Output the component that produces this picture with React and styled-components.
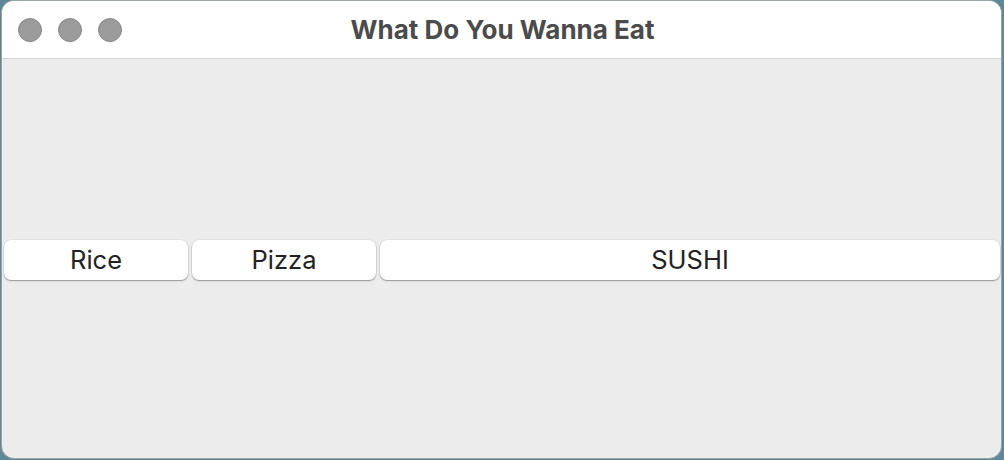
import React from 'react';
import styled, { createGlobalStyle } from 'styled-components';

const GlobalStyle = createGlobalStyle`
  html, body {
    margin: 0;
    padding: 0;
    width: 1004px;
    height: 460px;
    overflow: hidden;
    background: #5d8898;
  }
`;

const Window = styled.div`
  box-sizing: border-box;
  width: 1001px;
  height: 459px;
  margin-left: 1px;
  background: #ececec;
  border: 1px solid #9aa3a6;
  border-radius: 13px;
  overflow: hidden;
  display: flex;
  flex-direction: column;
  font-family: Inter, "Liberation Sans", Arial, sans-serif;
`;

const TitleBar = styled.div`
  position: relative;
  height: 57px;
  flex: none;
  background: #ffffff;
  border-bottom: 1px solid #d3d3d3;
  display: flex;
  align-items: center;
  justify-content: center;
`;

const Lights = styled.div`
  position: absolute;
  left: 16px;
  top: 17px;
  display: flex;
  gap: 16px;
`;

const Light = styled.span`
  box-sizing: border-box;
  width: 24px;
  height: 24px;
  border-radius: 50%;
  background: #9b9b9b;
  border: 1px solid #888888;
`;

const Title = styled.h1`
  margin: 0;
  padding-left: 2px;
  font-size: 26px;
  font-weight: 700;
  color: #4b4b4b;
`;

const Body = styled.div`
  flex: 1;
  display: flex;
  align-items: center;
  padding: 2px 1px 0 2px;
`;

const Row = styled.div`
  display: flex;
  gap: 4px;
  width: 100%;
`;

const Choice = styled.button`
  box-sizing: border-box;
  width: ${(p) => p.$w}px;
  flex: ${(p) => (p.$grow ? 1 : 'none')};
  height: 40px;
  border: none;
  border-radius: 7px;
  background: #ffffff;
  box-shadow: 0 1px 1.5px rgba(0, 0, 0, 0.35), 0 0 0 0.5px rgba(0, 0, 0, 0.08);
  font-family: Inter, "Liberation Sans", Arial, sans-serif;
  font-size: 25.5px;
  color: #222222;
  padding: 0;
  cursor: pointer;
`;

export default function App() {
  return (
    <>
      <GlobalStyle />
      <Window>
        <TitleBar>
          <Lights>
            <Light />
            <Light />
            <Light />
          </Lights>
          <Title>What Do You Wanna Eat</Title>
        </TitleBar>
        <Body>
          <Row>
            <Choice $w={184}>Rice</Choice>
            <Choice $w={184}>Pizza</Choice>
            <Choice $grow>SUSHI</Choice>
          </Row>
        </Body>
      </Window>
    </>
  );
}
